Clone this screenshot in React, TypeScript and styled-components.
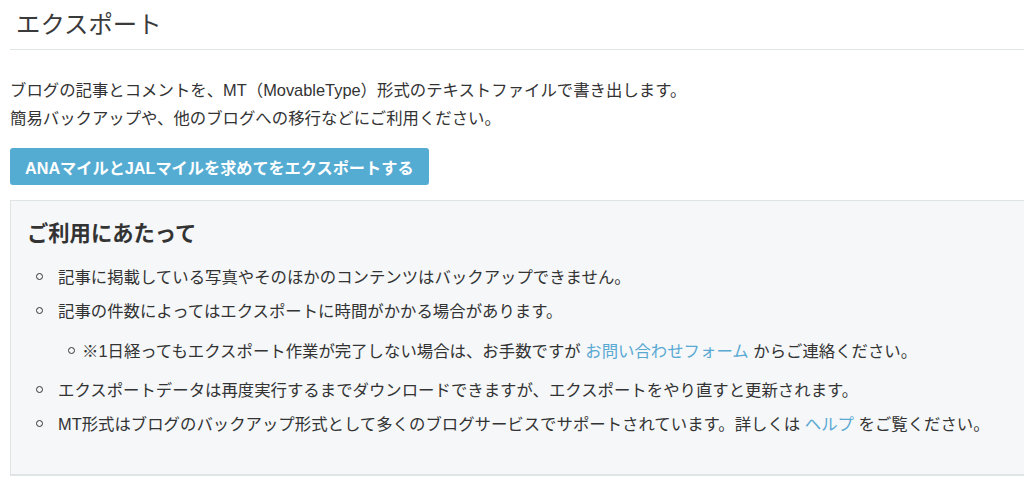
import React from "react";
import styled, { createGlobalStyle } from "styled-components";

const GlobalStyle = createGlobalStyle`
  html, body {
    margin: 0;
    padding: 0;
    background: #ffffff;
  }
  body {
    font-family: "Liberation Sans", "Noto Sans CJK JP", sans-serif;
    color: #333333;
    font-size: 16px;
    overflow: hidden;
  }
`;

const Page = styled.div`
  padding: 0 0 0 10px;
  width: 1030px;
`;

const Title = styled.h1`
  margin: 7px 0 0 0;
  padding: 0 6px 6px 6px;
  font-size: 24.4px;
  line-height: 36px;
  font-weight: 400;
  color: #3a3a3a;
  border-bottom: 1px solid #dfe4e4;
`;

const Lead = styled.p`
  margin: 26px 0 0 0;
  font-size: 16.4px;
  line-height: 28px;
  color: #333333;
`;

const ExportButton = styled.button`
  display: inline-flex;
  align-items: center;
  height: 37px;
  margin-top: 16px;
  padding: 0 15px;
  border: none;
  border-radius: 3px;
  background: #55acd2;
  color: #ffffff;
  font-family: inherit;
  font-size: 16.2px;
  font-weight: 700;
  cursor: pointer;
`;

const Notice = styled.section`
  margin-top: 15px;
  padding: 17px 16px 24px 16px;
  background: #f5f7f9;
  border: 1px solid #dfe4e5;
  border-bottom-width: 2px;
  height: 276px;
  box-sizing: border-box;
`;

const NoticeTitle = styled.h2`
  margin: 0;
  font-size: 21.3px;
  line-height: 32px;
  font-weight: 700;
  color: #333333;
`;

const List = styled.ul<{ $nested?: boolean }>`
  list-style: none;
  margin: ${(p) => (p.$nested ? "6px 0 5px 0" : "10px 0 0 0")};
  padding: 0 0 0 ${(p) => (p.$nested ? "24px" : "31px")};
`;

const Item = styled.li<{ $nested?: boolean }>`
  font-size: 16.4px;
  line-height: 34px;
  color: #333333;

  &::before {
    content: "";
    display: inline-block;
    box-sizing: border-box;
    width: 7px;
    height: 7px;
    border: 1.5px solid #333333;
    border-radius: 50%;
    vertical-align: middle;
    position: relative;
    top: -2px;
    margin-left: ${(p) => (p.$nested ? "-14px" : "-22px")};
    margin-right: ${(p) => (p.$nested ? "7px" : "15px")};
  }
`;

const Link = styled.a`
  color: #5aa9d3;
  text-decoration: none;
`;

export default function App() {
  return (
    <>
      <GlobalStyle />
      <Page>
        <Title>エクスポート</Title>
        <Lead>
          ブログの記事とコメントを、MT（MovableType）形式のテキストファイルで書き出します。
          <br />
          簡易バックアップや、他のブログへの移行などにご利用ください。
        </Lead>
        <ExportButton>ANAマイルとJALマイルを求めてをエクスポートする</ExportButton>
        <Notice>
          <NoticeTitle>ご利用にあたって</NoticeTitle>
          <List>
            <Item>記事に掲載している写真やそのほかのコンテンツはバックアップできません。</Item>
            <Item>
              記事の件数によってはエクスポートに時間がかかる場合があります。
              <List $nested>
                <Item $nested>
                  ※1日経ってもエクスポート作業が完了しない場合は、お手数ですが <Link href="#">お問い合わせフォーム</Link> からご連絡ください。
                </Item>
              </List>
            </Item>
            <Item>エクスポートデータは再度実行するまでダウンロードできますが、エクスポートをやり直すと更新されます。</Item>
            <Item>
              MT形式はブログのバックアップ形式として多くのブログサービスでサポートされています。詳しくは <Link href="#">ヘルプ</Link> をご覧ください。
            </Item>
          </List>
        </Notice>
      </Page>
    </>
  );
}
